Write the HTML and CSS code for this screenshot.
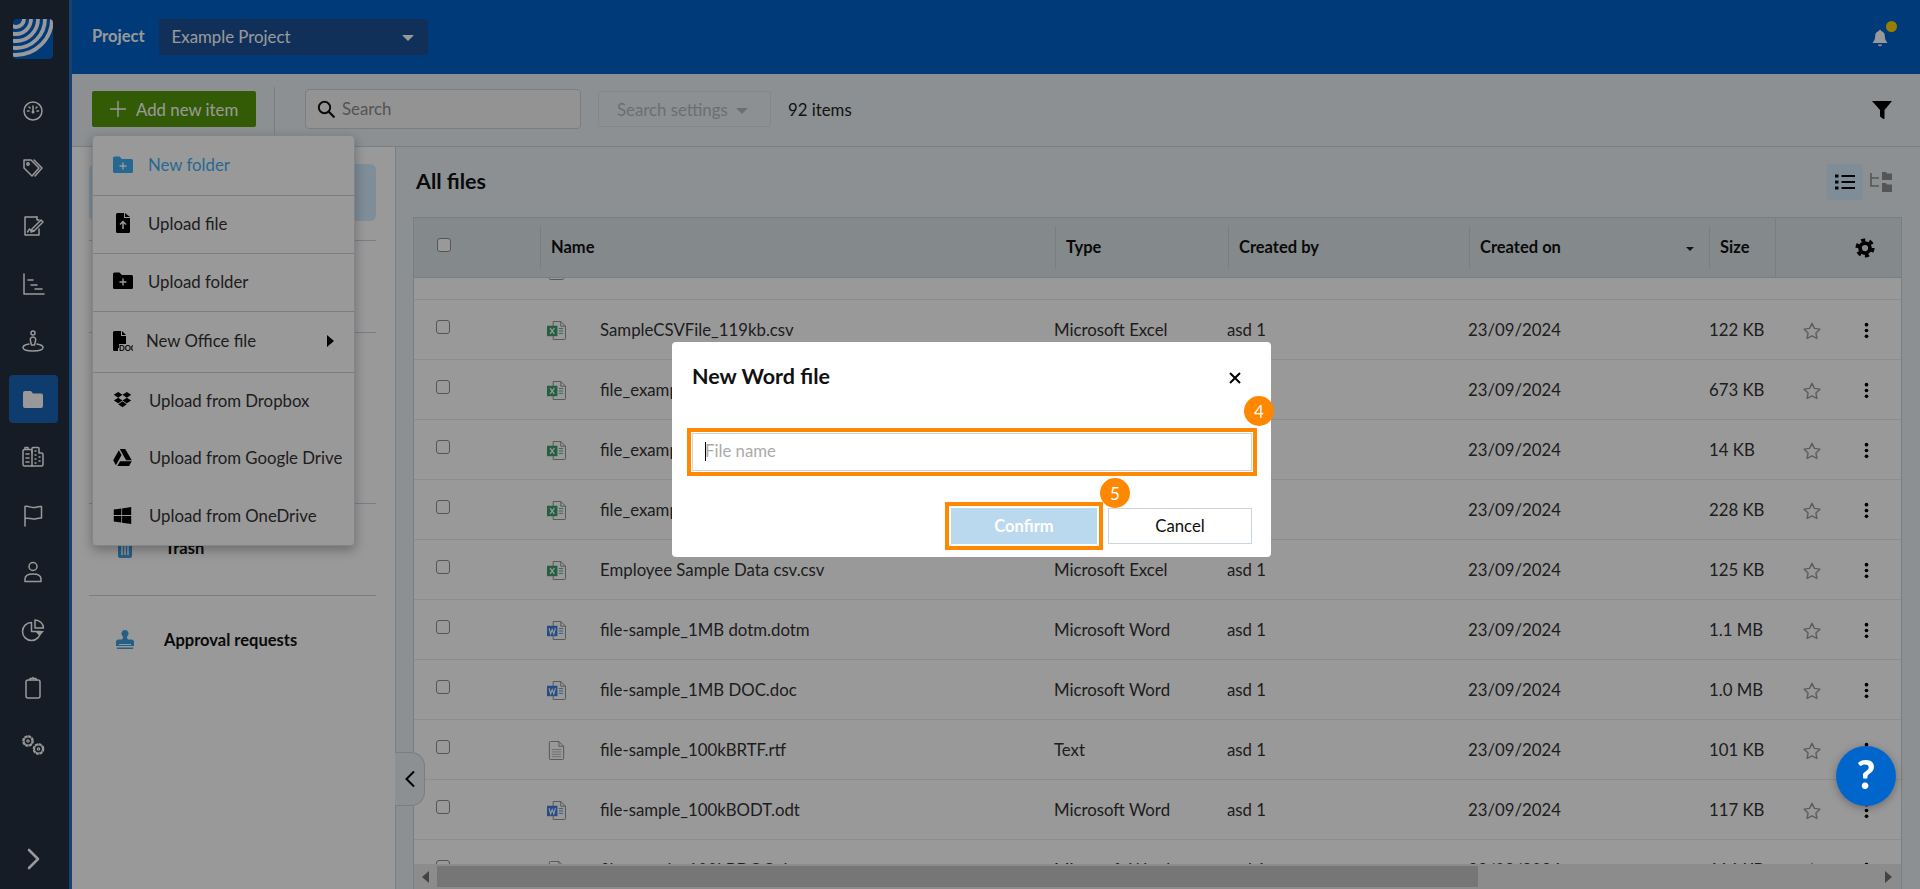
FILE: index.html
```html
<!DOCTYPE html>
<html>
<head>
  <meta charset="UTF-8">
  <title>All files</title>
  <link rel="stylesheet" href="styles.css">
</head>
<body>
  <svg class="sprites" width="0" height="0">
    <defs>
      <symbol id="i-excel" viewBox="0 0 20 20">
        <path d="M6.500.5h8l5 5v13a1 1 0 0 1-1 1h-12z" fill="#fff" stroke="#8e8e8e"/>
        <path d="M14.500.5v5h5" fill="none" stroke="#8e8e8e"/>
        <rect y="5" width="11" height="11" fill="#3f9f6e"/>
        <path d="M3.200 7.500l4.600 6M7.800 7.500l-4.600 6" stroke="#fff" stroke-width="1.300"/>
        <path d="M12.500 8h4.500M12.500 10.500h4.500M12.500 13h4.500" stroke="#5fa884"/>
      </symbol>
      <symbol id="i-word" viewBox="0 0 20 20">
        <path d="M6.500.5h8l5 5v13a1 1 0 0 1-1 1h-12z" fill="#fff" stroke="#8e8e8e"/>
        <path d="M14.500.5v5h5" fill="none" stroke="#8e8e8e"/>
        <rect y="5" width="11" height="11" fill="#3f7fe0"/>
        <path d="M2.200 7.500l1.600 6 1.700-4.500 1.700 4.500 1.600-6" fill="none" stroke="#fff" stroke-width="1.200"/>
        <path d="M12.500 8h4.500M12.500 10.500h4.500M12.500 13h4.500" stroke="#5f8fdc"/>
      </symbol>
      <symbol id="i-text" viewBox="0 0 20 20">
        <path d="M3.500.5h9l5 5v13a1 1 0 0 1-1 1h-13a1 1 0 0 1-1-1v-17a1 1 0 0 1 1-1z" fill="#fff" stroke="#8e8e8e"/>
        <path d="M12.500.5v5h5" fill="none" stroke="#8e8e8e"/>
        <path d="M5 9h10M5 11.500h10M5 14h10M5 16.500h10" stroke="#b5b5b5"/>
      </symbol>
      <symbol id="i-star" viewBox="0 0 24 24">
        <path d="M12 2.800l2.900 6.100 6.600.9-4.800 4.600 1.200 6.600-5.900-3.200-5.900 3.200 1.200-6.600-4.800-4.600 6.600-.9z" fill="none" stroke="#9c9c9c" stroke-width="1.700" stroke-linejoin="round"/>
      </symbol>
      <symbol id="i-dots" viewBox="0 0 6 20">
        <circle cx="3" cy="3" r="2.200"/><circle cx="3" cy="10" r="2.200"/><circle cx="3" cy="17" r="2.200"/>
      </symbol>
      <symbol id="i-gear" viewBox="0 0 24 24">
        <circle cx="12" cy="12" r="6" fill="none" stroke="currentColor" stroke-width="4.500"/>
        <circle cx="12" cy="12" r="9.500" fill="none" stroke="currentColor" stroke-width="4" stroke-dasharray="5 4.950"/>
      </symbol>
    </defs>
  </svg>

  <div class="app">
    <nav class="rail">
      <svg class="logo" viewBox="0 0 40 40">
        <clipPath id="logo-clip"><rect width="40" height="40" rx="4"/></clipPath>
        <g clip-path="url(#logo-clip)">
          <rect width="40" height="40" fill="#0061c8"/>
          <g fill="none" stroke="#fff" stroke-width="3.800">
            <circle cx="3" cy="0" r="8"/>
            <circle cx="3" cy="0" r="15"/>
            <circle cx="3" cy="0" r="22"/>
            <circle cx="3" cy="0" r="29"/>
            <circle cx="3" cy="0" r="36"/>
          </g>
        </g>
      </svg>
      <a class="rail-item"><svg viewBox="0 0 24 24"><circle cx="12" cy="12" r="9"/><path d="M12 12V7M6.500 12h1.500M16 12h1.500M8 8l1 1M16 8l-1 1"/><circle cx="12" cy="13" r="1.500" class="solid"/></svg></a>
      <a class="rail-item"><svg viewBox="0 0 24 24"><path d="M3 4h7l8 8-7 8-8-8z"/><path d="M13 4l8 8-7 8"/><circle cx="7" cy="8" r="1.200"/></svg></a>
      <a class="rail-item"><svg viewBox="0 0 24 24"><path d="M16 3H4v18h14v-6"/><path d="M16 3v3h2"/><path d="M11 15l9-9 2 2-9 9-3 1z"/><path d="M6.500 18l2-3 2 2 3-.5"/></svg></a>
      <a class="rail-item"><svg viewBox="0 0 24 24"><path d="M3 2v20h20"/><path d="M7 8h5M10 13h6M14 17h7"/></svg></a>
      <a class="rail-item"><svg viewBox="0 0 24 24"><circle cx="12" cy="4" r="2"/><path d="M12 8c-2.500 0-3 2-2.500 4l1 4h3l1-4c.5-2 0-4-2.500-4z"/><path d="M8 15c-3 .5-6 1.500-6 3.500S6 22 12 22s10-1.500 10-3.500-3-3-6-3.500"/></svg></a>
      <a class="rail-item is-active"><svg viewBox="0 0 24 24"><path class="solid" d="M2 6a2 2 0 0 1 2-2h6l2 2.500h8a2 2 0 0 1 2 2V19a2 2 0 0 1-2 2H4a2 2 0 0 1-2-2z"/></svg></a>
      <a class="rail-item"><svg viewBox="0 0 24 24"><path d="M2 6a1.500 1.500 0 0 1 1.500-1.500h6A1.500 1.500 0 0 1 11 6v15H3.500A1.500 1.500 0 0 1 2 19.500z"/><path d="M4 4.500V2.500h3v2"/><path d="M11 8l0-4.500a1 1 0 0 1 1-1h5a1 1 0 0 1 1 1V8h2.500a1.500 1.500 0 0 1 1.500 1.500v10a1.500 1.500 0 0 1-1.500 1.500H11"/><path d="M5 9h3M5 13h3M5 17h3M14 6h1M14 10h1M14 14h1M14 18h1M18 12h1M18 16h1"/></svg></a>
      <a class="rail-item"><svg viewBox="0 0 24 24"><path d="M4 23V3.500c3-1 5.500 1 8.500 1s5-1.500 8-1V15c-3-.5-5 1-8 1S7 14.500 4 15.500"/></svg></a>
      <a class="rail-item"><svg viewBox="0 0 24 24"><circle cx="12" cy="6.500" r="4"/><path d="M4 21.500V19c0-3 3-5 8-5s8 2 8 5v2.500z"/></svg></a>
      <a class="rail-item"><svg viewBox="0 0 24 24"><path d="M10.500 4.500a9 9 0 1 0 9 9h-9z"/><path d="M14 2v8h8.500A8.500 8.500 0 0 0 14 2z"/><path class="solid" d="M14 13h9l-4.500 5z"/></svg></a>
      <a class="rail-item"><svg viewBox="0 0 24 24"><rect x="5" y="4" width="14" height="18" rx="2"/><path d="M9 4V2.500h2.500L12 1.500l.5 1H15V4"/></svg></a>
      <a class="rail-item"><svg viewBox="0 0 24 24"><g class="thin"><circle cx="7" cy="8" r="4"/><circle cx="7" cy="8" r="1.200"/><circle cx="7" cy="8" r="5" stroke-width="1.600" stroke-dasharray="2 1.930"/><circle cx="17.500" cy="16" r="4"/><circle cx="17.500" cy="16" r="1.200"/><circle cx="17.500" cy="16" r="5" stroke-width="1.600" stroke-dasharray="2 1.930"/></g></svg></a>
      <a class="rail-item rail-toggle"><svg viewBox="0 0 24 24"><path class="bold" d="M8 3l9 9-9 9"/></svg></a>
    </nav>

    <div class="main">
      <header class="topbar">
        <span class="project-label">Project</span>
        <div class="project-select">
          <span>Example Project</span>
          <span class="caret"></span>
        </div>
        <div class="bell">
          <svg viewBox="0 0 24 24" width="18" height="20"><path d="M12 1c1 0 1.500.8 1.500 1.700 3.500.8 5 3.800 5 7.300 0 3.500 1 5.500 3 7.500v1H2.500v-1c2-2 3-4 3-7.500 0-3.500 1.500-6.500 5-7.300C10.500 1.800 11 1 12 1zM9.500 20.500h5a2.500 2.500 0 0 1-5 0z" fill="#fff"/></svg>
          <span class="bell-dot"></span>
        </div>
      </header>

      <div class="toolbar">
        <button class="add-btn">
          <svg viewBox="0 0 16 16" width="16" height="16"><path d="M8 0v16M0 8h16" stroke="#fff" stroke-width="1.400"/></svg>
          Add new item
        </button>
        <div class="toolbar-sep"></div>
        <div class="search">
          <svg viewBox="0 0 18 18" width="18" height="18"><circle cx="7.500" cy="7.500" r="5.700" fill="none" stroke="#111" stroke-width="1.900"/><path d="M11.800 11.800l5 5" stroke="#111" stroke-width="2.200" stroke-linecap="round"/></svg>
          <span>Search</span>
        </div>
        <div class="search-settings">
          <span>Search settings</span>
          <span class="caret caret-grey"></span>
        </div>
        <span class="item-count">92 items</span>
        <svg class="filter" viewBox="0 0 20 18" width="20" height="18"><path d="M0 0h20l-7.500 9v8a1 1 0 0 1-1.500.8L8 15.500V9z" fill="#000"/></svg>
      </div>

      <div class="content">
        <aside class="side">
          <div class="side-section side-top"><div class="side-active"></div></div>
          <div class="side-section side-a"></div>
          <div class="side-section side-b"></div>
          <div class="side-section side-c">
            <svg class="side-icon" viewBox="0 0 20 20" width="20" height="20"><path d="M3 4h14v14a2 2 0 0 1-2 2H5a2 2 0 0 1-2-2z" fill="#3f9fe0"/><path d="M7 7v10M10 7v10M13 7v10" stroke="#fff" stroke-width="1.500"/></svg>
            <span>Trash</span>
          </div>
          <div class="side-section side-d">
            <svg class="side-icon" viewBox="0 0 20 20" width="20" height="20"><path d="M10 0a3.500 3.500 0 0 1 2.500 6c-.8.9-.5 2.500.5 3.500h3.500A2.500 2.500 0 0 1 19 12v4H1v-4a2.500 2.500 0 0 1 2.500-2.500H7c1-1 1.300-2.600.5-3.500A3.500 3.500 0 0 1 10 0z" fill="#3f9fe0"/><path d="M1.500 17.500h17a1.500 1.500 0 0 1-1.500 1.500H3a1.500 1.500 0 0 1-1.500-1.500z" fill="#3f9fe0"/><path d="M4 14.500h12" stroke="#fff"/></svg>
            <span>Approval requests</span>
          </div>
        </aside>

        <section class="files">
          <div class="files-head">
            <h1>All files</h1>
            <div class="view-toggle">
              <span class="view-btn is-on">
                <svg viewBox="0 0 20 16" width="20" height="16"><path d="M6.500 2H20M6.500 8H20M6.500 14H20" stroke="#000" stroke-width="2"/><path d="M0 .5h3.500v3H0zM0 6.500h3.500v3H0zM0 12.500h3.500v3H0z" fill="#000"/></svg>
              </span>
              <span class="view-btn">
                <svg viewBox="0 0 22 20" width="22" height="20"><path d="M1 1v13h8M1 6h8" fill="none" stroke="#8e8e8e" stroke-width="1.600"/><path d="M12 0h4l1 1.500h5V8H12zM12 11h4l1 1.500h5V20H12z" fill="#8e8e8e"/></svg>
              </span>
            </div>
          </div>

          <div class="table">
            <div class="thead">
              <div class="th-check"><span class="check"></span></div>
              <div class="th">Name</div>
              <div class="th">Type</div>
              <div class="th">Created by</div>
              <div class="th th-sort">Created on<span class="sort-caret"></span></div>
              <div class="th">Size</div>
              <div class="th-gear"><svg width="20" height="20"><use href="#i-gear"/></svg></div>
            </div>

            <div class="tbody">
              <div class="rows">
                <div class="row"><span class="check"></span><span class="name"><svg class="ficon"><use href="#i-text"/></svg></span></div>
                <div class="row"><span class="check"></span><span class="name"><svg class="ficon"><use href="#i-excel"/></svg>SampleCSVFile_119kb.csv</span><span>Microsoft Excel</span><span>asd 1</span><span>23/09/2024</span><span>122 KB</span><svg class="star"><use href="#i-star"/></svg><svg class="dots"><use href="#i-dots"/></svg></div>
                <div class="row"><span class="check"></span><span class="name"><svg class="ficon"><use href="#i-excel"/></svg>file_example_XLS_5000.xls</span><span>Microsoft Excel</span><span>asd 1</span><span>23/09/2024</span><span>673 KB</span><svg class="star"><use href="#i-star"/></svg><svg class="dots"><use href="#i-dots"/></svg></div>
                <div class="row"><span class="check"></span><span class="name"><svg class="ficon"><use href="#i-excel"/></svg>file_example_XLS_10.xls</span><span>Microsoft Excel</span><span>asd 1</span><span>23/09/2024</span><span>14 KB</span><svg class="star"><use href="#i-star"/></svg><svg class="dots"><use href="#i-dots"/></svg></div>
                <div class="row"><span class="check"></span><span class="name"><svg class="ficon"><use href="#i-excel"/></svg>file_example_XLSX_5000.xlsx</span><span>Microsoft Excel</span><span>asd 1</span><span>23/09/2024</span><span>228 KB</span><svg class="star"><use href="#i-star"/></svg><svg class="dots"><use href="#i-dots"/></svg></div>
                <div class="row"><span class="check"></span><span class="name"><svg class="ficon"><use href="#i-excel"/></svg>Employee Sample Data csv.csv</span><span>Microsoft Excel</span><span>asd 1</span><span>23/09/2024</span><span>125 KB</span><svg class="star"><use href="#i-star"/></svg><svg class="dots"><use href="#i-dots"/></svg></div>
                <div class="row"><span class="check"></span><span class="name"><svg class="ficon"><use href="#i-word"/></svg>file-sample_1MB dotm.dotm</span><span>Microsoft Word</span><span>asd 1</span><span>23/09/2024</span><span>1.1 MB</span><svg class="star"><use href="#i-star"/></svg><svg class="dots"><use href="#i-dots"/></svg></div>
                <div class="row"><span class="check"></span><span class="name"><svg class="ficon"><use href="#i-word"/></svg>file-sample_1MB DOC.doc</span><span>Microsoft Word</span><span>asd 1</span><span>23/09/2024</span><span>1.0 MB</span><svg class="star"><use href="#i-star"/></svg><svg class="dots"><use href="#i-dots"/></svg></div>
                <div class="row"><span class="check"></span><span class="name"><svg class="ficon"><use href="#i-text"/></svg>file-sample_100kBRTF.rtf</span><span>Text</span><span>asd 1</span><span>23/09/2024</span><span>101 KB</span><svg class="star"><use href="#i-star"/></svg><svg class="dots"><use href="#i-dots"/></svg></div>
                <div class="row"><span class="check"></span><span class="name"><svg class="ficon"><use href="#i-word"/></svg>file-sample_100kBODT.odt</span><span>Microsoft Word</span><span>asd 1</span><span>23/09/2024</span><span>117 KB</span><svg class="star"><use href="#i-star"/></svg><svg class="dots"><use href="#i-dots"/></svg></div>
                <div class="row"><span class="check"></span><span class="name"><svg class="ficon"><use href="#i-text"/></svg>file-sample_100kBDOC.doc</span><span>Microsoft Word</span><span>asd 1</span><span>23/09/2024</span><span>116 KB</span><svg class="star"><use href="#i-star"/></svg><svg class="dots"><use href="#i-dots"/></svg></div>
              </div>
            </div>

            <div class="hscroll">
              <span class="arrow arrow-left"></span>
              <span class="thumb"></span>
              <span class="arrow arrow-right"></span>
            </div>
          </div>
        </section>

        <button class="collapse">
          <svg viewBox="0 0 12 18" width="12" height="18"><path d="M10 1.500L2.500 9l7.500 7.500" fill="none" stroke="#000" stroke-width="2"/></svg>
        </button>
      </div>
    </div>
  </div>

  <!-- add item dropdown -->
  <div class="menu">
    <div class="menu-group">
      <div class="menu-item is-hover">
        <svg class="menu-icon" viewBox="0 0 20 18" width="20" height="18"><path d="M0 3a1.500 1.500 0 0 1 1.500-1.500h5L9 4h9.500A1.500 1.500 0 0 1 20 5.500v11a1.500 1.500 0 0 1-1.500 1.500h-17A1.500 1.500 0 0 1 0 16.500z" fill="#3fb0f5"/><path d="M10 7.500v7M6.500 11h7" stroke="#fff" stroke-width="1.400"/></svg>
        New folder
      </div>
    </div>
    <div class="menu-group">
      <div class="menu-item">
        <svg class="menu-icon" viewBox="0 0 20 20" width="20" height="20"><path d="M3 1.500A1.500 1.500 0 0 1 4.500 0H11v5h6v13.500a1.500 1.500 0 0 1-1.500 1.500h-11A1.500 1.500 0 0 1 3 18.500zM12 0l5 4h-5z" fill="#000"/><path d="M10 16v-7M7 11.500L10 8.500l3 3" fill="none" stroke="#fff" stroke-width="1.500"/></svg>
        Upload file
      </div>
    </div>
    <div class="menu-group">
      <div class="menu-item">
        <svg class="menu-icon" viewBox="0 0 20 18" width="20" height="18"><path d="M0 2a1.500 1.500 0 0 1 1.500-1.500h5L9 3h9.500A1.500 1.500 0 0 1 20 4.500v11a1.500 1.500 0 0 1-1.500 1.500h-17A1.500 1.500 0 0 1 0 15.500z" fill="#000"/><path d="M10 6.500v7M6.500 10h7" stroke="#fff" stroke-width="1.400"/></svg>
        Upload folder
      </div>
    </div>
    <div class="menu-group">
      <div class="menu-item menu-office">
        <svg class="menu-icon" viewBox="0 0 20 20" width="20" height="20"><path d="M0 1.500A1.500 1.500 0 0 1 1.500 0H8v5h5v8H6v4H0zM9 0l4 4H9zM0 17h5v3H1.500A1.500 1.500 0 0 1 0 18.500z" fill="#000"/><text x="6" y="19.500" class="doc-label">DOC</text></svg>
        New Office file
        <span class="submenu-arrow"></span>
      </div>
    </div>
    <div class="menu-group">
      <div class="menu-item menu-cloud">
        <svg class="menu-icon" viewBox="0 0 24 22" width="19" height="18"><path d="M6.500 1L12 4.500 6.500 8 1 4.500zM17.500 1L23 4.500 17.500 8 12 4.500zM1 11.500L6.500 8l5.500 3.500L6.500 15zM12 11.500L17.500 8 23 11.500 17.500 15zM6.500 16.500L12 13l5.500 3.500L12 20z" fill="#000"/></svg>
        Upload from Dropbox
      </div>
      <div class="menu-item menu-cloud">
        <svg class="menu-icon" viewBox="0 0 24 22" width="19" height="17"><path d="M8.500 0h7l8.500 14.500h-7.300zM7.200 1.500l3.600 6.300L3.500 21 0 14.500zM5.300 22l3.600-6.300H24L20.500 22z" fill="#000"/></svg>
        Upload from Google Drive
      </div>
      <div class="menu-item menu-cloud">
        <svg class="menu-icon" viewBox="0 0 24 24" width="19" height="19"><path d="M1 4.500l9.500-1.300v8.300H1zM11.500 3L23 1.300v10.200H11.500zM1 12.500h9.500v8.300L1 19.500zM11.500 12.500H23v10.200l-11.500-1.700z" fill="#000"/></svg>
        Upload from OneDrive
      </div>
    </div>
  </div>

  <!-- modal -->
  <div class="overlay">
    <div class="dialog">
      <div class="dialog-head">
        <h2>New Word file</h2>
        <svg class="dialog-close" viewBox="0 0 12 12" width="12" height="12"><path d="M1 1l10 10M11 1L1 11" stroke="#000" stroke-width="2"/></svg>
      </div>
      <div class="dialog-field">
        <input class="dialog-input" placeholder="File name">
        <span class="text-caret"></span>
      </div>
      <div class="dialog-actions">
        <button class="btn-confirm">Confirm</button>
        <button class="btn-cancel">Cancel</button>
      </div>
      <span class="step step-4">4</span>
      <span class="step step-5">5</span>
    </div>
  </div>

  <button class="help">?</button>
</body>
</html>
```

FILE: styles.css
```css
* {
  box-sizing: border-box;
}
html,
body {
  height: 100%;
  margin: 0;
  overflow: hidden;
}
body {
  font-family: Lato, "Noto Sans", sans-serif;
  font-size: 16.800px;
  color: #333;
  background: #fff;
}
.sprites {
  position: absolute;
}
.app {
  display: flex;
  height: 889px;
}

/* left rail */
.rail {
  width: 72px;
  flex: none;
  display: flex;
  flex-direction: column;
  align-items: center;
  padding: 19px 3px 6px 0;
  gap: 9.700px;
  background: #252f3f;
  border-right: 3px solid #2770c0;
}
.logo {
  width: 40px;
  height: 40px;
  margin-bottom: 18px;
}
.rail-item {
  width: 49px;
  height: 48px;
  flex: none;
  display: flex;
  align-items: center;
  justify-content: center;
  border-radius: 4px;
}
.rail-item svg {
  width: 24px;
  height: 24px;
  fill: none;
  stroke: #fff;
  stroke-width: 1.5;
  stroke-linejoin: round;
  stroke-linecap: round;
}
.rail-item .solid {
  fill: #fff;
  stroke: none;
}
.rail-item .thin {
  stroke-width: 1.2;
}
.rail-item .bold {
  stroke-width: 2.6;
}
.rail-item.is-active {
  background: #1964b8;
}
.rail-toggle {
  margin-top: auto;
}

.main {
  flex: 1;
  min-width: 0;
  display: flex;
  flex-direction: column;
}

/* top bar */
.topbar {
  height: 74px;
  flex: none;
  display: flex;
  align-items: center;
  padding: 0 31px 0 20px;
  background: #0061c8;
  color: #fff;
}
.project-label {
  font-size: 16.500px;
  font-weight: 700;
  margin: 0 14px 2px 0;
}
.project-select {
  width: 269px;
  height: 36px;
  display: flex;
  align-items: center;
  justify-content: space-between;
  padding: 0 14px 2px 13px;
  border-radius: 3px;
  background: #1b5096;
}
.caret {
  width: 0;
  height: 0;
  border-left: 6px solid transparent;
  border-right: 6px solid transparent;
  border-top: 6px solid #fff;
  margin-top: 4px;
}
.bell {
  position: relative;
  margin-left: auto;
  display: flex;
  margin-top: 2px;
}
.bell-dot {
  position: absolute;
  top: -7px;
  right: -8px;
  width: 11px;
  height: 11px;
  border-radius: 50%;
  background: #ffd400;
}

/* toolbar */
.toolbar {
  height: 73px;
  flex: none;
  display: flex;
  align-items: center;
  padding: 0 28px 2px 20px;
  background: #e9f0f3;
  border-bottom: 1px solid #c9d4dc;
}
.add-btn {
  width: 164px;
  height: 36px;
  display: flex;
  align-items: center;
  padding: 0 0 0 18px;
  gap: 10px;
  border: 0;
  border-radius: 2px;
  background: #559608;
  color: #fff;
  font: inherit;
}
.toolbar-sep {
  width: 1px;
  height: 49px;
  margin: 4px 30px 0 18px;
  background: #c9d4dc;
}
.search {
  width: 276px;
  height: 40px;
  display: flex;
  align-items: center;
  gap: 7px;
  padding: 0 0 1px 11px;
  border: 1px solid #c9d4dc;
  border-radius: 4px;
  background: #f6f6f6;
  color: #8a8a8a;
}
.search-settings {
  width: 173px;
  height: 36px;
  display: flex;
  align-items: center;
  gap: 8px;
  margin-left: 17px;
  padding-left: 18px;
  border: 1px solid #dbe2e6;
  border-radius: 2px;
  color: #b4b9bc;
}
.caret-grey {
  border-top-color: #b4b9bc;
}
.item-count {
  margin-left: 17px;
  color: #222;
}
.filter {
  margin: 2px 0 0 auto;
}

/* sidebar */
.content {
  position: relative;
  flex: 1;
  min-height: 0;
  display: flex;
}
.side {
  width: 324px;
  flex: none;
  padding: 0 19px 0 17px;
  background: #fff;
  border-right: 1px solid #c9d4dc;
}
.side-section {
  border-bottom: 1px solid #c9d4dc;
  display: flex;
  align-items: center;
  font-size: 16.500px;
  font-weight: 700;
  color: #111;
}
.side-top {
  height: 94px;
  align-items: flex-start;
  padding-top: 17px;
}
.side-active {
  width: 100%;
  height: 57px;
  border-radius: 6px;
  background: #d4ecff;
}
.side-a {
  height: 92px;
}
.side-b {
  height: 171px;
}
.side-c {
  height: 92px;
  padding: 0 0 3px 26px;
  gap: 30px;
}
.side-d {
  height: 90px;
  padding: 0 0 3px 26px;
  gap: 29px;
  border-bottom: 0;
}

/* files table */
.files {
  flex: 1;
  min-width: 0;
  display: flex;
  flex-direction: column;
  padding: 0 18px 0 17px;
  background: #e9f0f3;
}
.files-head {
  height: 70px;
  flex: none;
  display: flex;
  align-items: center;
  justify-content: space-between;
  padding: 0 3px 2px 3px;
}
.files-head h1 {
  margin: 0;
  font-size: 21.500px;
  font-weight: 700;
  color: #111;
}
.view-toggle {
  display: flex;
  margin-bottom: -2px;
}
.view-btn {
  width: 36px;
  height: 36px;
  display: flex;
  align-items: center;
  justify-content: center;
  border-radius: 2px;
}
.view-btn.is-on {
  background: #d4ecff;
}
.table {
  flex: 1;
  min-height: 0;
  display: flex;
  flex-direction: column;
  border: 1px solid #c9d4dc;
  border-bottom: 0;
  background: #fff;
}
.thead {
  height: 60px;
  flex: none;
  display: grid;
  grid-template-columns: 126px 515px 173px 241px 240px 66px 126px;
  align-items: center;
  background: #dde4e8;
  border-bottom: 1px solid #c9d4dc;
  font-size: 16.500px;
  font-weight: 700;
  color: #111;
}
.th-check {
  padding: 0 0 6px 23px;
  display: flex;
}
.th {
  height: 43px;
  display: flex;
  align-items: center;
  padding: 0 0 2px 10px;
  border-left: 1px solid #c9d4dc;
}
.th-sort {
  position: relative;
}
.sort-caret {
  position: absolute;
  right: 15px;
  top: 21px;
  border-left: 4px solid transparent;
  border-right: 4px solid transparent;
  border-top: 4px solid #222;
}
.th-gear {
  height: 100%;
  display: flex;
  align-items: center;
  justify-content: flex-end;
  padding-right: 26px;
  border-left: 1px solid #c9d4dc;
  color: #000;
}
.tbody {
  flex: 1;
  min-height: 0;
  overflow: hidden;
}
/* list is scrolled a little */
.rows {
  margin-top: -38px;
}
.row {
  height: 60px;
  display: grid;
  grid-template-columns: 126px 514px 173px 241px 241px 75px 56px 61px;
  align-items: center;
  padding-bottom: 1px;
  border-bottom: 1px solid #ebebeb;
  color: #333;
}
.check {
  width: 14px;
  height: 14px;
  border: 1px solid #8e8e8e;
  border-radius: 3px;
  background: #fff;
}
.row .check {
  margin: -4px 0 0 22px;
}
.name {
  display: flex;
  align-items: center;
  white-space: nowrap;
}
.ficon {
  width: 19px;
  height: 19px;
  margin: 3px 34px 0 7px;
  flex: none;
}
.star {
  width: 20px;
  height: 20px;
  justify-self: center;
  margin-top: 3px;
}
.dots {
  width: 5px;
  height: 17px;
  justify-self: center;
  margin: 3px 8px 0 0;
}
.hscroll {
  height: 25px;
  flex: none;
  display: flex;
  align-items: center;
  padding: 0 8px;
  background: #e9e9e9;
}
.thumb {
  width: 1041px;
  height: 21px;
  margin-left: 8px;
  background: #c5c5c5;
}
.arrow {
  border-top: 6px solid transparent;
  border-bottom: 6px solid transparent;
}
.arrow-left {
  border-right: 7px solid #707070;
}
.arrow-right {
  margin-left: auto;
  margin-right: 1px;
  border-left: 7px solid #707070;
}
.collapse {
  position: absolute;
  left: 323px;
  top: 605px;
  width: 30px;
  height: 54px;
  display: flex;
  align-items: center;
  justify-content: center;
  padding: 0;
  border: 1px solid #c9d4dc;
  border-left: 0;
  border-radius: 0 14px 14px 0;
  background: #e9f0f3;
}

/* dropdown */
.menu {
  position: absolute;
  left: 92px;
  top: 135px;
  width: 263px;
  height: 411px;
  border: 1px solid #d8e0e6;
  border-radius: 4px;
  background: #fff;
  box-shadow: 0 4px 12px rgba(0, 0, 0, 0.3);
  color: #333;
}
.menu-group {
  border-bottom: 1px solid #c9d4dc;
}
.menu-group:last-child {
  border-bottom: 0;
}
.menu-item {
  height: 57px;
  display: flex;
  align-items: center;
  padding: 0 0 3px 20px;
  gap: 15px;
}
.menu-item.is-hover {
  color: #3fb0f5;
  height: 59px;
}
.menu-office {
  height: 60px;
  gap: 13px;
}
.menu-cloud {
  height: 57.500px;
  gap: 17px;
}
.menu-icon {
  flex: none;
}
.doc-label {
  font-size: 7.500px;
  font-weight: 700;
  fill: #000;
}
.submenu-arrow {
  margin-left: auto;
  margin-right: 20px;
  border-top: 6px solid transparent;
  border-bottom: 6px solid transparent;
  border-left: 7px solid #000;
}

/* modal */
.overlay {
  position: fixed;
  inset: 0;
  display: flex;
  align-items: center;
  justify-content: center;
  padding: 10px 0 0 23px;
  background: rgba(0, 0, 0, 0.4);
}
.dialog {
  position: relative;
  width: 599px;
  height: 215px;
  padding: 0 19px 0 20px;
  border-radius: 4px;
  background: #fff;
}
.dialog-head {
  height: 91px;
  display: flex;
  align-items: flex-start;
  justify-content: space-between;
  padding: 21px 11px 0 0;
}
.dialog-head h2 {
  margin: 0;
  font-size: 21.500px;
  font-weight: 700;
  color: #111;
}
.dialog-close {
  margin-top: 9px;
}
.dialog-field {
  position: relative;
  height: 38px;
}
.dialog-input {
  width: 100%;
  height: 38px;
  padding: 0 12px 3px;
  border: 1px solid #c9d4dc;
  border-radius: 0;
  outline: 4px solid #ff8800;
  outline-offset: 1px;
  font: inherit;
  color: #333;
}
.dialog-input::placeholder {
  color: #aaa;
  opacity: 1;
}
.text-caret {
  position: absolute;
  left: 13px;
  top: 9px;
  width: 1px;
  height: 19px;
  background: #000;
}
.dialog-actions {
  display: flex;
  justify-content: flex-end;
  gap: 11px;
  margin-top: 37px;
}
.dialog-actions button {
  height: 36px;
  padding-bottom: 2px;
  border-radius: 0;
  font: inherit;
}
.dialog-actions .btn-confirm {
  width: 146px;
  border: 0;
  background: #bbd9ee;
  color: #fff;
  font-weight: 700;
  font-size: 16.500px;
  outline: 4px solid #ff8800;
  outline-offset: 2px;
}
.btn-cancel {
  width: 144px;
  border: 1px solid #c9d4dc;
  background: #fff;
  color: #111;
}
.step {
  position: absolute;
  width: 30px;
  height: 30px;
  display: flex;
  align-items: center;
  justify-content: center;
  border-radius: 50%;
  background: #ff8800;
  color: #fff;
  font-size: 17px;
}
.step-4 {
  left: 572px;
  top: 54px;
}
.step-5 {
  left: 428px;
  top: 136px;
}

.help {
  position: fixed;
  left: 1836px;
  top: 746px;
  width: 60px;
  height: 60px;
  padding: 0 0 4px;
  border: 0;
  border-radius: 50%;
  background: #0066cc;
  color: #fff;
  font: 900 40px Lato, sans-serif;
  box-shadow: 0 2px 8px rgba(0, 0, 0, 0.3);
}
```
